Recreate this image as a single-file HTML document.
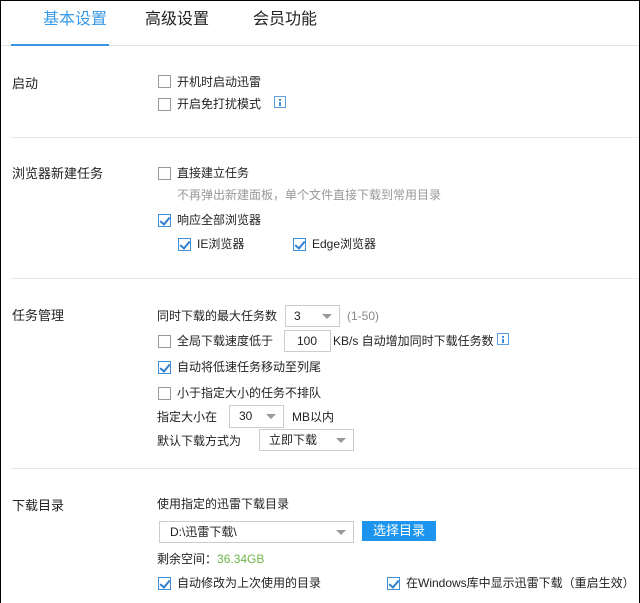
<!DOCTYPE html>
<html><head><meta charset="utf-8"><style>
*{margin:0;padding:0;box-sizing:border-box}
body{width:640px;height:602px;background:#fff;font-family:"Liberation Sans","Noto Sans CJK SC",sans-serif;font-size:12px;color:#222;position:relative;overflow:hidden}
.frame{position:absolute;left:0;top:0;width:640px;height:603px;border:1px solid #000;border-bottom:none;pointer-events:none}
.a{position:absolute;white-space:nowrap;line-height:14px}
.tab{position:absolute;top:10px;font-size:16px;line-height:20px;color:#222}
.hr{position:absolute;left:11px;right:0;height:1px;background:#e8e8e8}
.cb{position:absolute;width:13px;height:13px;border:1px solid #9a9a9a;background:#fff}
.cb.on{border-color:#3d8fd8}
.cb.on::after{content:"";position:absolute;left:3px;top:0px;width:4px;height:8px;border:solid #2f7fd0;border-width:0 2px 2px 0;transform:rotate(40deg)}
.sel{position:absolute;border:1px solid #ccc;background:#fff}
.sel span{position:absolute;left:8px;top:3px;line-height:14px}
.sel i{position:absolute;right:7px;top:8px;width:0;height:0;border-left:5px solid transparent;border-right:5px solid transparent;border-top:5px solid #999}
.info{position:absolute;width:12px;height:12px;border:1px solid #5aa0e0}
.info::before{content:"";position:absolute;left:4px;top:2px;width:2px;height:2px;background:#3d8fd8}
.info::after{content:"";position:absolute;left:4px;top:5px;width:2px;height:4px;background:#3d8fd8}
.lbl{position:absolute;left:12px;font-size:13px;line-height:16px}
</style></head><body>
<div class="tab" style="left:43px;color:#3a9ae6">基本设置</div>
<div class="tab" style="left:145px">高级设置</div>
<div class="tab" style="left:253px">会员功能</div>
<div style="position:absolute;left:0;right:0;top:45px;height:1px;background:#e2e2e2"></div>
<div style="position:absolute;left:11px;width:98px;top:44px;height:2px;background:#3a94e4"></div>

<div class="lbl" style="top:76px">启动</div>
<div class="cb" style="left:158px;top:75px"></div><div class="a" style="left:177px;top:75px">开机时启动迅雷</div>
<div class="cb" style="left:158px;top:98px"></div><div class="a" style="left:177px;top:97px">开启免打扰模式</div>
<div class="info" style="left:274px;top:96px"></div>
<div class="hr" style="top:137px"></div>

<div class="lbl" style="top:166px">浏览器新建任务</div>
<div class="cb" style="left:158px;top:167px"></div><div class="a" style="left:177px;top:166px">直接建立任务</div>
<div class="a" style="left:177px;top:188px;color:#999">不再弹出新建面板，单个文件直接下载到常用目录</div>
<div class="cb on" style="left:158px;top:214px"></div><div class="a" style="left:177px;top:213px">响应全部浏览器</div>
<div class="cb on" style="left:178px;top:238px"></div><div class="a" style="left:197px;top:237px">IE浏览器</div>
<div class="cb on" style="left:293px;top:238px"></div><div class="a" style="left:312px;top:237px">Edge浏览器</div>
<div class="hr" style="top:278px"></div>

<div class="lbl" style="top:308px">任务管理</div>
<div class="a" style="left:157px;top:309px">同时下载的最大任务数</div>
<div class="sel" style="left:285px;top:305px;width:55px;height:22px"><span>3</span><i></i></div>
<div class="a" style="left:347px;top:309px;color:#888">(1-50)</div>
<div class="cb" style="left:158px;top:335px"></div><div class="a" style="left:177px;top:334px">全局下载速度低于</div>
<div class="sel" style="left:284px;top:330px;width:47px;height:22px"><span style="left:12px">100</span></div>
<div class="a" style="left:333px;top:334px">KB/s 自动增加同时下载任务数</div>
<div class="info" style="left:497px;top:333px"></div>
<div class="cb on" style="left:158px;top:361px"></div><div class="a" style="left:177px;top:360px">自动将低速任务移动至列尾</div>
<div class="cb" style="left:158px;top:387px"></div><div class="a" style="left:177px;top:386px">小于指定大小的任务不排队</div>
<div class="a" style="left:157px;top:410px">指定大小在</div>
<div class="sel" style="left:229px;top:405px;width:55px;height:23px"><span style="left:9px">30</span><i></i></div>
<div class="a" style="left:292px;top:410px">MB以内</div>
<div class="a" style="left:157px;top:434px">默认下载方式为</div>
<div class="sel" style="left:259px;top:429px;width:95px;height:22px"><span style="left:9px">立即下载</span><i></i></div>
<div class="hr" style="top:468px"></div>

<div class="lbl" style="top:498px">下载目录</div>
<div class="a" style="left:157px;top:497px">使用指定的迅雷下载目录</div>
<div class="sel" style="left:159px;top:521px;width:195px;height:22px"><span style="left:10px">D:\迅雷下载\</span><i></i></div>
<div style="position:absolute;left:362px;top:521px;width:74px;height:20px;background:#1d95ee;color:#fff;text-align:center;line-height:20px;font-size:13px">选择目录</div>
<div class="a" style="left:157px;top:552px">剩余空间：<span style="color:#6fb64a">36.34GB</span></div>
<div class="cb on" style="left:158px;top:577px"></div><div class="a" style="left:177px;top:576px">自动修改为上次使用的目录</div>
<div class="cb on" style="left:387px;top:577px"></div><div class="a" style="left:406px;top:576px">在Windows库中显示迅雷下载（重启生效）</div>
<div class="frame"></div>
</body></html>
